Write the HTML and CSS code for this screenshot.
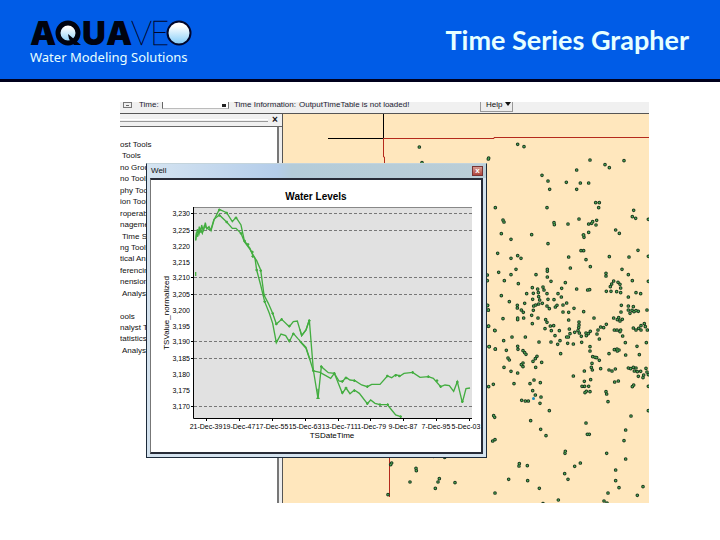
FILE: index.html
```html
<!DOCTYPE html>
<html lang="en">
<head>
<meta charset="utf-8">
<title>Time Series Grapher</title>
<link rel="stylesheet" href="styles.css">
</head>
<body>
<header class="banner">
  <div class="brand">
    <svg class="logo" viewBox="0 0 164 28" role="img" aria-label="Aquaveo">
      <defs>
        <linearGradient id="water" x1="0" y1="0" x2="0" y2="1">
          <stop offset="0.2" stop-color="#fff"/>
          <stop offset="1" stop-color="#7fcbf8"/>
        </linearGradient>
      </defs>
      <text class="logo-bold" x="0" y="25">A</text>
      <circle cx="38" cy="13" r="10" fill="url(#water)" stroke="#00030f" stroke-width="5"/>
      <path d="M38 14l13 11h-7l-5-6z" fill="#00030f"/>
      <text class="logo-bold" x="52" y="25">U</text>
      <text class="logo-bold" x="76" y="25">A</text>
      <text class="logo-thin" x="101" y="25">V</text>
      <text class="logo-thin" x="120" y="25">E</text>
      <circle cx="149" cy="13" r="11.500" fill="url(#water)" stroke="#00062b" stroke-width="2"/>
    </svg>
    <p class="tagline">Water Modeling Solutions</p>
  </div>
  <h1 class="title">Time Series Grapher</h1>
</header>
<main class="slide">
  <section class="app">
    <div class="toolbar">
      <button class="tiny" type="button" aria-label="Options"></button>
      <label class="time-label" for="time">Time:</label>
      <select class="time" id="time"><option></option></select>
      <span class="info">Time Information:</span>
      <span class="status">OutputTimeTable is not loaded!</span>
      <button class="help" type="button">Help <span class="caret"></span></button>
    </div>
    <div class="workspace">
      <aside class="panel">
        <div class="panel-bar"><span class="grip"></span><button class="panel-close" type="button" aria-label="Close panel">×</button></div>
        <ul class="tree">
          <li>ost Tools</li><li class="in">Tools</li><li>no Grou</li><li>no Tools</li><li>phy Too</li><li>ion Tool</li><li>roperab</li><li>nageme</li><li class="in">Time Se</li><li>ng Tools</li><li>tical An</li><li>ferencin</li><li>nension</li><li class="in">Analyst</li><li>&nbsp;</li><li>ools</li><li>nalyst T</li><li>tatistics</li><li class="in">Analyst</li>
        </ul>
      </aside>
      <svg class="map" viewBox="283 114 366 389" preserveAspectRatio="xMinYMin slice" aria-label="Well map">
        <path d="M328 138.500H383.500M383.500 114V138" class="black-line"/>
        <path d="M383.500 138.500H494V137.500H649M383.500 138.500V157H384.500V300L389.500 458V497" class="red-line"/>
        <defs>
          <g id="wells">
            <path transform="translate(480 95) scale(.33333)" d="M113 148h0M132 155h0M26 189h0M330 195h0M375 209h0M388 218h0M432 197h0M290 225h0M186 241h0M204 258h0M209 283h0M259 262h0M301 264h0M326 264h0M290 283h0M347 323h0M358 323h0M356 338h0M201 338h0M46 338h0M461 346h0M457 365h0M467 370h0M505 373h0M69 375h0M72 381h0M222 383h0M223 389h0M264 387h0M297 372h0M326 387h0M338 380h0M350 376h0M335 385h0M348 390h0M407 405h0M418 415h0M326 412h0M310 420h0M64 416h0M155 419h0"/>
            <path transform="translate(480 230) scale(.33333)" d="M93 28h0M204 41h0M311 15h0M312 22h0M53 70h0M93 85h0M113 77h0M123 85h0M266 81h0M303 62h0M311 62h0M318 89h0M388 80h0M447 81h0M474 61h0M505 79h0M331 110h0M271 114h0M56 127h0M93 134h0M108 118h0M168 134h0M202 118h0M202 124h0M202 141h0M22 135h0M22 152h0M73 152h0M115 161h0M213 154h0M256 158h0M378 130h0M378 138h0M426 118h0M445 134h0M457 152h0M505 154h0M401 153h0M395 162h0M414 157h0M391 170h0M420 163h0M422 174h0M393 184h0M410 185h0M422 188h0M379 184h0M290 177h0M323 180h0M329 179h0M245 175h0M234 191h0M244 201h0M468 188h0M482 191h0M445 201h0M64 197h0M88 215h0M140 191h0M157 173h0M173 177h0M189 171h0M192 180h0M175 188h0M160 190h0M201 191h0M176 200h0M158 208h0M179 210h0M204 208h0M222 209h0M187 220h0M176 222h0M161 228h0M167 225h0M201 228h0M208 236h0M226 231h0M231 226h0M249 225h0M260 219h0M134 220h0M112 226h0M112 234h0M124 240h0M130 247h0M160 241h0M155 256h0M131 264h0M113 264h0M113 269h0M174 264h0M157 281h0M22 227h0M25 240h0M69 266h0M249 246h0M266 247h0M282 235h0M311 245h0M266 270h0M342 264h0M297 276h0M297 285h0M296 293h0M197 269h0M201 277h0M195 296h0M211 288h0M221 287h0M214 302h0M238 302h0M225 317h0M268 297h0M270 311h0M265 321h0M260 321h0M284 307h0M294 302h0M298 309h0M304 319h0M318 309h0M319 317h0M325 311h0M331 304h0M354 300h0M351 312h0M358 327h0M362 291h0M371 293h0M379 283h0M424 226h0M423 246h0M445 228h0M445 240h0M460 230h0M456 241h0M462 245h0M468 242h0M475 244h0M450 250h0M501 240h0M401 264h0M412 269h0M420 273h0M427 268h0M416 263h0M403 300h0M411 300h0M422 300h0M420 305h0M428 318h0M460 294h0M468 300h0M476 295h0M483 287h0M493 281h0M496 290h0M483 300h0M502 300h0M25 289h0M45 302h0M96 321h0M136 321h0M71 332h0M28 350h0M46 357h0M113 349h0M114 358h0M79 361h0M84 384h0M88 390h0M129 362h0M134 368h0M138 373h0M177 336h0M213 336h0M233 343h0M240 332h0M263 340h0M280 342h0M305 337h0M330 350h0M330 363h0M387 371h0M403 359h0M411 357h0M417 360h0M412 363h0M436 338h0M437 375h0M471 349h0M478 374h0M499 338h0M242 371h0M171 379h0M166 386h0M159 394h0M185 397h0M129 399h0M124 404h0M129 410h0M72 412h0M167 412h0M338 380h0M345 382h0M350 383h0M358 391h0M336 400h0M334 412h0M362 416h0M387 420h0M406 417h0M445 414h0M452 416h0M460 412h0M468 414h0M498 415h0"/>
            <path transform="translate(480 370) scale(.33333)" d="M93 4h0M113 9h0M280 18h0M313 3h0M337 0h0M396 3h0M463 3h0M472 5h0M482 4h0M491 15h0M475 19h0M489 23h0M501 6h0M505 14h0M26 50h0M40 43h0M102 41h0M150 41h0M162 30h0M181 38h0M158 62h0M166 75h0M183 81h0M125 91h0M136 93h0M145 93h0M180 100h0M208 122h0M152 152h0M182 178h0M198 197h0M41 137h0M44 142h0M38 213h0M45 209h0M313 34h0M332 29h0M306 49h0M314 49h0M326 49h0M315 68h0M319 64h0M330 65h0M404 36h0M415 33h0M457 50h0M461 45h0M505 49h0M378 65h0M380 72h0M384 95h0M453 138h0M505 122h0M318 159h0M322 193h0M328 193h0M437 180h0M432 212h0M256 244h0M255 250h0M380 250h0M437 267h0M118 281h0M117 288h0M142 287h0M284 289h0M301 279h0M407 300h0M254 311h0M264 328h0M86 328h0M143 332h0M407 332h0M417 353h0M178 355h0M45 369h0M384 369h0M489 350h0M472 376h0M235 390h0M372 393h0M381 399h0M189 401h0"/>
            <path transform="translate(300 95) scale(.33333)" d="M358 156h0M366 203h0M565 192h0"/>
            <path transform="translate(300 290) scale(.33333)" d="M563 46h0M565 60h0M566 108h0M584 121h0M567 170h0M586 177h0M275 519h0M272 524h0M348 535h0M349 542h0M330 576h0M418 566h0M414 576h0M465 578h0M406 595h0M264 614h0M434 502h0M400 499h0"/>
          </g>
        </defs>
        <use href="#wells" class="well-edge"/>
        <use href="#wells" class="well-core"/>
        <circle cx="533.500" cy="398.500" r="1.500" fill="#168cc0"/>
      </svg>
    </div>
    <section class="window">
      <div class="window-bar"><h2 class="window-title">Well</h2><button class="window-close" type="button" aria-label="Close">x</button></div>
      <div class="window-body">
        <svg class="chart" viewBox="151 180 330 272" aria-label="Water Levels chart">
          <defs><path id="m" d="M-4 0H4M0 -4V4"/></defs>
          <text class="chart-title" x="316" y="200">Water Levels</text>
          <rect x="193" y="207" width="279" height="211" fill="#e1e1e1"/>
          <path class="plot-top" d="M193 207.500H472"/>
          <path class="grid" d="M194 213.500H472M194 230.500H472M194 277.500H472M194 294.500H472M194 341.500H472M194 358.500H472M194 406.500H472"/>
          <path class="axis" d="M193.500 207V418.500H472M191 213.500h3M191 230.500h3M191 277.500h3M191 294.500h3M191 341.500h3M191 358.500h3M191 406.500h3M206.500 418v3M239.500 418v3M272.500 418v3M305.500 418v3M338.500 418v3M370.500 418v3M403.500 418v3M436.500 418v3M469.500 418v3"/>
          <g class="tick-y">
            <text x="190" y="216">3,230</text><text x="190" y="233">3,225</text><text x="190" y="249">3,220</text><text x="190" y="265">3,215</text><text x="190" y="280">3,210</text><text x="190" y="297">3,205</text><text x="190" y="313">3,200</text><text x="190" y="329">3,195</text><text x="190" y="344">3,190</text><text x="190" y="361">3,185</text><text x="190" y="377">3,180</text><text x="190" y="393">3,175</text><text x="190" y="409">3,170</text>
          </g>
          <g class="tick-x">
            <text x="206" y="429">21-Dec-39</text><text x="239" y="429">19-Dec-47</text><text x="272" y="429">17-Dec-55</text><text x="305" y="429">15-Dec-63</text><text x="338" y="429">13-Dec-71</text><text x="370" y="429">11-Dec-79</text><text x="403" y="429">9-Dec-87</text><text x="436" y="429">7-Dec-95</text><text x="466" y="429">5-Dec-03</text>
          </g>
          <text class="axis-name" x="332" y="438">TSDateTime</text>
          <text class="axis-name" transform="translate(169 313) rotate(-90)">TSValue_normalized</text>
          <g class="series" transform="translate(110 190) scale(.33333)">
            <path d="M257 246v12M257 152L259 128 263 140 268 110 272 128 275 105 280 124 286 98 290 116 297 110 303 122 312 90 328 58 350 68 367 95 378 82 393 105 403 152 420 175 428 195 440 212 452 240 462 315 475 340 488 370 499 402 515 388 538 410 550 395 562 393 575 437 588 420 598 390"/>
            <path d="M257 150L262 118 267 132 271 118 277 130 283 108 296 118 303 118 312 88 328 75 350 96 367 115 378 115 393 130 403 155 420 178 435 205 440 240 452 285 464 335 478 370 488 400 499 458 513 432 527 437 538 455 550 430 563 445 588 472 600 510"/>
          </g>
          <g class="series" transform="translate(300 290) scale(.33333)">
            <path d="M0 118L5 137 18 120 28 90 40 240 54 325 64 230 85 248 103 250 117 273 127 275 138 262 150 270 165 272 185 285 202 290 215 283 240 283 262 258 275 263 287 254 300 258 312 250 338 247 360 262 385 260 400 265 422 290 435 285 448 287 461 304 472 275 487 338 498 296 510 294"/>
            <path d="M0 155L18 175 30 210 40 243 60 247 92 265 103 250 127 310 138 294 150 311 163 300 178 310 202 341 212 330 225 340 240 344 262 344 275 360 287 375 302 380"/>
          </g>
          <g class="series" transform="translate(110 190) scale(.33333)">
            <use href="#m" x="328" y="60"/><use href="#m" x="350" y="69"/><use href="#m" x="328" y="76"/><use href="#m" x="350" y="96"/><use href="#m" x="378" y="84"/><use href="#m" x="393" y="130"/><use href="#m" x="404" y="153"/><use href="#m" x="414" y="163"/><use href="#m" x="427" y="186"/><use href="#m" x="428" y="199"/><use href="#m" x="440" y="240"/><use href="#m" x="452" y="242"/><use href="#m" x="462" y="315"/><use href="#m" x="464" y="335"/><use href="#m" x="488" y="370"/><use href="#m" x="499" y="402"/><use href="#m" x="499" y="454"/><use href="#m" x="515" y="388"/><use href="#m" x="538" y="408"/><use href="#m" x="538" y="452"/><use href="#m" x="550" y="432"/>
          </g>
          <g class="series" transform="translate(300 290) scale(.33333)">
            <path d="M54 296V327M49 325h10"/>
            <use href="#m" x="28" y="92"/><use href="#m" x="40" y="242"/><use href="#m" x="64" y="230"/><use href="#m" x="103" y="250"/><use href="#m" x="127" y="274"/><use href="#m" x="138" y="264"/><use href="#m" x="163" y="272"/><use href="#m" x="202" y="290"/><use href="#m" x="262" y="258"/><use href="#m" x="287" y="256"/><use href="#m" x="298" y="258"/><use href="#m" x="338" y="247"/><use href="#m" x="385" y="260"/><use href="#m" x="411" y="272"/><use href="#m" x="422" y="290"/><use href="#m" x="472" y="276"/><use href="#m" x="487" y="335"/><use href="#m" x="127" y="308"/><use href="#m" x="138" y="294"/><use href="#m" x="163" y="302"/><use href="#m" x="202" y="341"/><use href="#m" x="240" y="344"/><use href="#m" x="263" y="344"/><use href="#m" x="302" y="380"/>
          </g>
        </svg>
      </div>
    </section>
  </section>
</main>
</body>
</html>
```
FILE: styles.css
```css
* { box-sizing: border-box; }
body { margin: 0; background: #fff; color: #111; font-family: "Liberation Sans", sans-serif; }
h1, h2, p, ul { margin: 0; padding: 0; }
button, select { font: inherit; color: inherit; padding: 0; border: 0; }

.banner { display: flex; justify-content: space-between; align-items: flex-start; height: 82px; padding: 20px 31px 0 30px; background: #005ce7; border-bottom: 3px solid #00001c; }
.logo { display: block; width: 164px; height: 28px; }
.logo-bold { font: 900 33px Inter, sans-serif; fill: #00030f; }
.logo-thin { font: 100 33px Lato, sans-serif; fill: #00062b; stroke: #00062b; stroke-width: 0.4; }
.tagline { font: 13px/18px "Noto Sans", sans-serif; color: #e6ffff; white-space: nowrap; }
.title { font: 700 27px/40px Lato, sans-serif; color: #e6ffff; white-space: nowrap; }

.slide { padding: 20px 71px 0 120px; }
.app { position: relative; overflow: hidden; font-size: 8px; }
.toolbar { display: flex; align-items: flex-start; height: 12px; overflow: hidden; background: #f0f0f0; border-bottom: 1px solid #555; line-height: 6px; white-space: nowrap; color: #223; }
.tiny { width: 9px; height: 6px; margin-left: 3px; border: 1px solid #777; background: #eee linear-gradient(#666, #666) no-repeat center / 3px 1px; }
.time-label { width: 20px; margin-left: 7px; }
.time { appearance: none; width: 67px; height: 7px; margin-left: 3px; border-left: 1px solid #666; background: #fff linear-gradient(#222, #222) no-repeat right 2px top 2px / 4px 3px; border-bottom: 1px solid #bbb; border-right: 1px solid #777; }
.info { margin-left: 5px; }
.status { margin-left: 3px; }
.help { margin-left: auto; margin-right: 136px; height: 10px; width: 33px; padding-left: 5px; border: solid #999; border-width: 0 1px 1px; background: #eee; text-align: left; line-height: 6px; display: flex; gap: 3px; color: #111; }
.caret { border: 3px solid transparent; border-top: 4px solid #111; border-bottom: 0; }

.workspace { display: flex; align-items: stretch; }
.panel { flex: 0 0 163px; border-right: 1px solid #555; background: linear-gradient(90deg, #fff 157px, #777 157px, #777 159px, #eee 159px); }
.panel-bar { display: flex; align-items: center; height: 13px; padding-right: 4px; gap: 4px; background: #f0f0f0; border-bottom: 1px solid #666; }
.grip { flex: 1; height: 3px; border-top: 1px solid #fff; border-bottom: 1px solid #999; }
.panel-close { width: 6px; height: 9px; background: none; font-size: 10px; line-height: 8px; font-weight: 700; }
.tree { display: flex; flex-direction: column; justify-content: space-between; height: 217px; margin: 12px 5px 0 0; list-style: none; font-size: 8px; line-height: 11px; white-space: nowrap; }
.tree li { width: 26px; }
.in { padding-left: 2px; }
.map { flex: 1; min-width: 0; aspect-ratio: 366 / 389; background: #ffe7bd; }
.black-line { fill: none; stroke: #000; }
.red-line { fill: none; stroke: #b52a1c; }
.well-edge { fill: none; stroke: #1b3a22; stroke-width: 11px; stroke-linecap: round; }
.well-core { fill: none; stroke: #52b155; stroke-width: 5px; stroke-linecap: round; }

.window { position: absolute; left: 26px; top: 61px; width: 341px; padding: 0 3px 3px; border: 1px solid #1d2b3b; border-top-color: #c4d4dc; background: #d4e2ee; }
.window-bar { display: flex; align-items: center; justify-content: space-between; height: 14px; margin: 0 -3px; padding: 0 3px 0 4px; background: linear-gradient(90deg, #d5e4f1 0, #b4cdea 130px, #b4ccd9 145px, #bbced7 100%); }
.window-title { font-size: 8px; line-height: 14px; font-weight: 400; }
.window-close { width: 11px; height: 10px; border: 1px solid #733; background: linear-gradient(#d79a90, #b0433a); color: #fff; font-size: 8px; line-height: 6px; font-weight: 700; }
.window-body { border: 2px solid #282c38; border-left: 1px solid #777; background: #fff; }
.chart { display: block; width: 100%; font-family: "Liberation Sans", sans-serif; }
.chart-title { font-size: 10px; font-weight: 700; text-anchor: middle; }
.plot-top { stroke: #888; }
.grid { stroke: #777; stroke-dasharray: 3 2; }
.axis { fill: none; stroke: #000; }
.tick-y { font-size: 7px; text-anchor: end; }
.tick-x { font-size: 7px; text-anchor: middle; }
.axis-name { font-size: 8px; text-anchor: middle; }
.series { fill: none; stroke: #43ad40; stroke-width: 4px; }
```
